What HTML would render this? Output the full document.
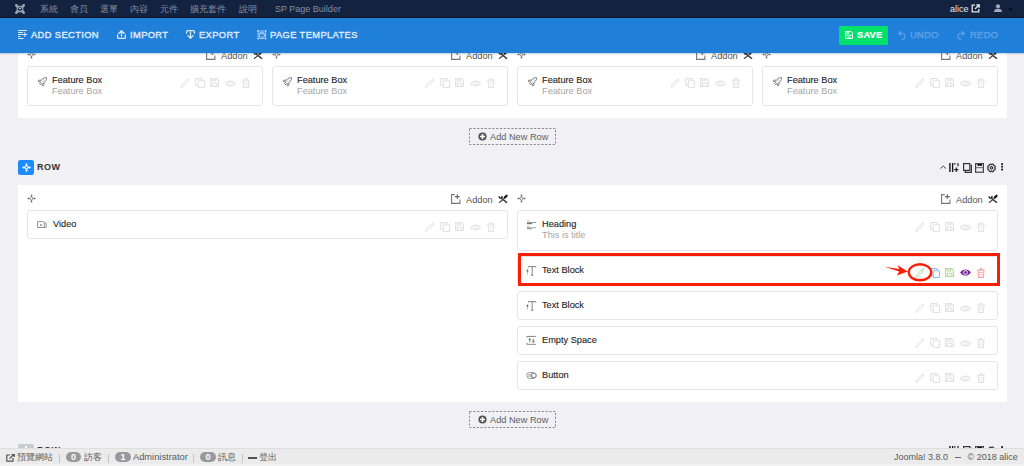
<!DOCTYPE html>
<html><head><meta charset="utf-8">
<style>
*{box-sizing:border-box;margin:0;padding:0}
html,body{width:1024px;height:466px;overflow:hidden}
body{position:relative;background:#f0f0f5;font-family:"Liberation Sans",sans-serif;font-size:9px;color:#333}
.abs{position:absolute}
svg{position:absolute;overflow:visible}
span{position:absolute;white-space:nowrap}
#nav{left:0;top:0;width:1024px;height:18px;background:#13223f;border-bottom:1px solid #0a152b}
.nv{top:3px;font-size:9px;line-height:12px;color:#868fa1}
#tb{left:0;top:18px;width:1024px;height:35px;background:#1f7fd9;box-shadow:0 1px 1.5px rgba(20,60,110,0.25)}
.tbt{top:10px;font-size:9.3px;line-height:14px;font-weight:normal;letter-spacing:0.4px;color:#e2edf9;-webkit-text-stroke:0.35px #e2edf9}
.sec{position:absolute;left:18px;width:989px;background:#fff}
.card{position:absolute;background:#fff;border:1px solid #e6e6e9;border-radius:3px}
.ttl{margin-top:-1px;font-size:9.8px;line-height:11px;color:#1e1e1e;-webkit-text-stroke:0.12px #1e1e1e;transform:scaleX(0.94);transform-origin:0 0}
.sub{margin-top:-1px;font-size:9.8px;line-height:11px;color:#a6a6a6;transform:scaleX(0.94);transform-origin:0 0}
.hdr{font-size:9.8px;line-height:11px;color:#555;transform:scaleX(0.94);transform-origin:0 0}
.anr{position:absolute;width:87px;height:17px;border:1px dashed #8d8d8d}
#foot{left:0;top:448px;width:1024px;height:18px;background:#ebebec;border-top:1px solid #dedede;border-bottom:2px solid #f2f2f3}
.ft{top:3px;font-size:9.3px;line-height:11px;color:#5a5a5a}
.badge{top:3px;height:10px;border-radius:5px;background:#999;color:#fff;font-size:9px;line-height:10px;text-align:center;font-weight:bold}
.sep{top:5px;width:1px;height:9px;background:#c4c4c4}
</style></head><body>
<div class="sec" style="top:40px;height:78px"></div><svg style="left:27px;top:50px" width="9" height="9" viewBox="0 0 9 9"><g fill="#6a6a6a"><path d="M4.5 0.2L3.2 1.8H5.8Z M4.5 8.8L3.2 7.2H5.8Z M0.2 4.5L1.8 3.2V5.8Z M8.8 4.5L7.2 3.2V5.8Z"/></g><g stroke="#6a6a6a" stroke-width="0.8" fill="none"><path d="M4.5 1.5V3 M4.5 6V7.5 M1.5 4.5H3 M6 4.5H7.5"/><circle cx="4.5" cy="4.5" r="1.5"/></g></svg><svg style="left:206px;top:50px" width="10" height="10" viewBox="0 0 10 10"><path d="M3.8 0.6H0.6V9.4H8.9V5.6" fill="none" stroke="#777" stroke-width="1.1"/><path d="M6.3 0.2V5 M3.9 2.6H8.8" stroke="#666" stroke-width="1.1"/></svg><span class="hdr" style="left:221px;top:50px">Addon</span><svg style="left:251px;top:48px" width="14" height="14" viewBox="0 0 14 14"><path d="M3.0 4.4 Q3.2 6.4 5.2 6.2 Q6.4 5.6 5.9 3.9" fill="none" stroke="#111" stroke-width="1.3"/><path d="M5.9 6.6 L10.6 10.4" stroke="#444" stroke-width="1.5" stroke-linecap="round"/><path d="M8.7 5.6 L10.6 3.7" stroke="#111" stroke-width="2.2" stroke-linecap="round"/><path d="M7.6 7.0 L3.3 10.5" stroke="#444" stroke-width="1.1" stroke-linecap="round"/></svg><div class="card" style="left:27px;top:66px;width:236px;height:40px"></div><svg style="left:34px;top:73px" width="16" height="16" viewBox="0 0 16 16"><g transform="translate(8.9,8.2) rotate(45) scale(0.78) translate(-5,-7)" fill="none" stroke="#777" stroke-width="1.1" stroke-linejoin="round"><path d="M5 0.5 C7 2 7.3 4 7.3 6.5 V10.3 H2.7 V6.5 C2.7 4 3 2 5 0.5Z"/><path d="M2.7 7.2 L0.6 9.6 V11.6 L2.7 10.3 M7.3 7.2 L9.4 9.6 V11.6 L7.3 10.3 M4 10.3 V12.3 H6 V10.3"/><path d="M3.6 5.2 H6.4 M3.6 7.6 H6.4" stroke="#aaa" stroke-width="0.9"/></g></svg><span class="ttl" style="left:52px;top:75px">Feature Box</span><span class="sub" style="left:52px;top:86px">Feature Box</span><svg style="left:180px;top:78px" width="10" height="10" viewBox="0 0 10 10"><path d="M1.2 9.3 L0.9 7.9 L7.2 1.3 Q8 0.6 8.7 1.3 Q9.3 2 8.6 2.7 L2.3 9.1 Z M6.4 2.1 L7.9 3.5" fill="none" stroke="#e2e2e2" stroke-width="1" stroke-linejoin="round"/></svg><svg style="left:195px;top:78px" width="10" height="10" viewBox="0 0 10 10"><rect x="0.6" y="0.6" width="6.6" height="6.8" rx="0.6" fill="none" stroke="#e2e2e2" stroke-width="1.1"/><rect x="3.2" y="2.8" width="6.3" height="6.7" rx="0.4" fill="#fff" stroke="#e2e2e2" stroke-width="1.1"/></svg><svg style="left:210px;top:78.3px" width="9" height="9" viewBox="0 0 9 9"><path d="M0.6 0.6H6.8L8.4 2.2V8.4H0.6Z" fill="none" stroke="#e2e2e2" stroke-width="1.1"/><path d="M2.2 0.6V3H5.8V0.6 M4.6 1.3V2.3" fill="none" stroke="#e2e2e2" stroke-width="1"/><rect x="2.2" y="5.2" width="4.6" height="3.2" fill="none" stroke="#e2e2e2" stroke-width="1"/></svg><svg style="left:225px;top:79.5px" width="11" height="7" viewBox="0 0 11 7"><path d="M0.6 3.5 C2.6 0.2 8.4 0.2 10.4 3.5 C8.4 6.8 2.6 6.8 0.6 3.5Z" fill="none" stroke="#e2e2e2" stroke-width="1.1"/><circle cx="5.5" cy="3.5" r="1.8" fill="none" stroke="#e2e2e2" stroke-width="1"/></svg><svg style="left:242px;top:78px" width="8" height="10" viewBox="0 0 8 10"><path d="M0.3 2.2H7.7 M2.6 0.7H5.4" stroke="#e2e2e2" stroke-width="1.2"/><path d="M1.1 2.5L1.6 9.4H6.4L6.9 2.5" fill="none" stroke="#e2e2e2" stroke-width="1.1"/><path d="M2.2 4.5H5.8 M2.3 6.7H5.7" stroke="#e2e2e2" stroke-width="0.8"/></svg><svg style="left:272px;top:50px" width="9" height="9" viewBox="0 0 9 9"><g fill="#6a6a6a"><path d="M4.5 0.2L3.2 1.8H5.8Z M4.5 8.8L3.2 7.2H5.8Z M0.2 4.5L1.8 3.2V5.8Z M8.8 4.5L7.2 3.2V5.8Z"/></g><g stroke="#6a6a6a" stroke-width="0.8" fill="none"><path d="M4.5 1.5V3 M4.5 6V7.5 M1.5 4.5H3 M6 4.5H7.5"/><circle cx="4.5" cy="4.5" r="1.5"/></g></svg><svg style="left:451px;top:50px" width="10" height="10" viewBox="0 0 10 10"><path d="M3.8 0.6H0.6V9.4H8.9V5.6" fill="none" stroke="#777" stroke-width="1.1"/><path d="M6.3 0.2V5 M3.9 2.6H8.8" stroke="#666" stroke-width="1.1"/></svg><span class="hdr" style="left:466px;top:50px">Addon</span><svg style="left:496px;top:48px" width="14" height="14" viewBox="0 0 14 14"><path d="M3.0 4.4 Q3.2 6.4 5.2 6.2 Q6.4 5.6 5.9 3.9" fill="none" stroke="#111" stroke-width="1.3"/><path d="M5.9 6.6 L10.6 10.4" stroke="#444" stroke-width="1.5" stroke-linecap="round"/><path d="M8.7 5.6 L10.6 3.7" stroke="#111" stroke-width="2.2" stroke-linecap="round"/><path d="M7.6 7.0 L3.3 10.5" stroke="#444" stroke-width="1.1" stroke-linecap="round"/></svg><div class="card" style="left:272px;top:66px;width:236px;height:40px"></div><svg style="left:279px;top:73px" width="16" height="16" viewBox="0 0 16 16"><g transform="translate(8.9,8.2) rotate(45) scale(0.78) translate(-5,-7)" fill="none" stroke="#777" stroke-width="1.1" stroke-linejoin="round"><path d="M5 0.5 C7 2 7.3 4 7.3 6.5 V10.3 H2.7 V6.5 C2.7 4 3 2 5 0.5Z"/><path d="M2.7 7.2 L0.6 9.6 V11.6 L2.7 10.3 M7.3 7.2 L9.4 9.6 V11.6 L7.3 10.3 M4 10.3 V12.3 H6 V10.3"/><path d="M3.6 5.2 H6.4 M3.6 7.6 H6.4" stroke="#aaa" stroke-width="0.9"/></g></svg><span class="ttl" style="left:297px;top:75px">Feature Box</span><span class="sub" style="left:297px;top:86px">Feature Box</span><svg style="left:425px;top:78px" width="10" height="10" viewBox="0 0 10 10"><path d="M1.2 9.3 L0.9 7.9 L7.2 1.3 Q8 0.6 8.7 1.3 Q9.3 2 8.6 2.7 L2.3 9.1 Z M6.4 2.1 L7.9 3.5" fill="none" stroke="#e2e2e2" stroke-width="1" stroke-linejoin="round"/></svg><svg style="left:440px;top:78px" width="10" height="10" viewBox="0 0 10 10"><rect x="0.6" y="0.6" width="6.6" height="6.8" rx="0.6" fill="none" stroke="#e2e2e2" stroke-width="1.1"/><rect x="3.2" y="2.8" width="6.3" height="6.7" rx="0.4" fill="#fff" stroke="#e2e2e2" stroke-width="1.1"/></svg><svg style="left:455px;top:78.3px" width="9" height="9" viewBox="0 0 9 9"><path d="M0.6 0.6H6.8L8.4 2.2V8.4H0.6Z" fill="none" stroke="#e2e2e2" stroke-width="1.1"/><path d="M2.2 0.6V3H5.8V0.6 M4.6 1.3V2.3" fill="none" stroke="#e2e2e2" stroke-width="1"/><rect x="2.2" y="5.2" width="4.6" height="3.2" fill="none" stroke="#e2e2e2" stroke-width="1"/></svg><svg style="left:470px;top:79.5px" width="11" height="7" viewBox="0 0 11 7"><path d="M0.6 3.5 C2.6 0.2 8.4 0.2 10.4 3.5 C8.4 6.8 2.6 6.8 0.6 3.5Z" fill="none" stroke="#e2e2e2" stroke-width="1.1"/><circle cx="5.5" cy="3.5" r="1.8" fill="none" stroke="#e2e2e2" stroke-width="1"/></svg><svg style="left:487px;top:78px" width="8" height="10" viewBox="0 0 8 10"><path d="M0.3 2.2H7.7 M2.6 0.7H5.4" stroke="#e2e2e2" stroke-width="1.2"/><path d="M1.1 2.5L1.6 9.4H6.4L6.9 2.5" fill="none" stroke="#e2e2e2" stroke-width="1.1"/><path d="M2.2 4.5H5.8 M2.3 6.7H5.7" stroke="#e2e2e2" stroke-width="0.8"/></svg><svg style="left:517px;top:50px" width="9" height="9" viewBox="0 0 9 9"><g fill="#6a6a6a"><path d="M4.5 0.2L3.2 1.8H5.8Z M4.5 8.8L3.2 7.2H5.8Z M0.2 4.5L1.8 3.2V5.8Z M8.8 4.5L7.2 3.2V5.8Z"/></g><g stroke="#6a6a6a" stroke-width="0.8" fill="none"><path d="M4.5 1.5V3 M4.5 6V7.5 M1.5 4.5H3 M6 4.5H7.5"/><circle cx="4.5" cy="4.5" r="1.5"/></g></svg><svg style="left:696px;top:50px" width="10" height="10" viewBox="0 0 10 10"><path d="M3.8 0.6H0.6V9.4H8.9V5.6" fill="none" stroke="#777" stroke-width="1.1"/><path d="M6.3 0.2V5 M3.9 2.6H8.8" stroke="#666" stroke-width="1.1"/></svg><span class="hdr" style="left:711px;top:50px">Addon</span><svg style="left:741px;top:48px" width="14" height="14" viewBox="0 0 14 14"><path d="M3.0 4.4 Q3.2 6.4 5.2 6.2 Q6.4 5.6 5.9 3.9" fill="none" stroke="#111" stroke-width="1.3"/><path d="M5.9 6.6 L10.6 10.4" stroke="#444" stroke-width="1.5" stroke-linecap="round"/><path d="M8.7 5.6 L10.6 3.7" stroke="#111" stroke-width="2.2" stroke-linecap="round"/><path d="M7.6 7.0 L3.3 10.5" stroke="#444" stroke-width="1.1" stroke-linecap="round"/></svg><div class="card" style="left:517px;top:66px;width:236px;height:40px"></div><svg style="left:524px;top:73px" width="16" height="16" viewBox="0 0 16 16"><g transform="translate(8.9,8.2) rotate(45) scale(0.78) translate(-5,-7)" fill="none" stroke="#777" stroke-width="1.1" stroke-linejoin="round"><path d="M5 0.5 C7 2 7.3 4 7.3 6.5 V10.3 H2.7 V6.5 C2.7 4 3 2 5 0.5Z"/><path d="M2.7 7.2 L0.6 9.6 V11.6 L2.7 10.3 M7.3 7.2 L9.4 9.6 V11.6 L7.3 10.3 M4 10.3 V12.3 H6 V10.3"/><path d="M3.6 5.2 H6.4 M3.6 7.6 H6.4" stroke="#aaa" stroke-width="0.9"/></g></svg><span class="ttl" style="left:542px;top:75px">Feature Box</span><span class="sub" style="left:542px;top:86px">Feature Box</span><svg style="left:670px;top:78px" width="10" height="10" viewBox="0 0 10 10"><path d="M1.2 9.3 L0.9 7.9 L7.2 1.3 Q8 0.6 8.7 1.3 Q9.3 2 8.6 2.7 L2.3 9.1 Z M6.4 2.1 L7.9 3.5" fill="none" stroke="#e2e2e2" stroke-width="1" stroke-linejoin="round"/></svg><svg style="left:685px;top:78px" width="10" height="10" viewBox="0 0 10 10"><rect x="0.6" y="0.6" width="6.6" height="6.8" rx="0.6" fill="none" stroke="#e2e2e2" stroke-width="1.1"/><rect x="3.2" y="2.8" width="6.3" height="6.7" rx="0.4" fill="#fff" stroke="#e2e2e2" stroke-width="1.1"/></svg><svg style="left:700px;top:78.3px" width="9" height="9" viewBox="0 0 9 9"><path d="M0.6 0.6H6.8L8.4 2.2V8.4H0.6Z" fill="none" stroke="#e2e2e2" stroke-width="1.1"/><path d="M2.2 0.6V3H5.8V0.6 M4.6 1.3V2.3" fill="none" stroke="#e2e2e2" stroke-width="1"/><rect x="2.2" y="5.2" width="4.6" height="3.2" fill="none" stroke="#e2e2e2" stroke-width="1"/></svg><svg style="left:715px;top:79.5px" width="11" height="7" viewBox="0 0 11 7"><path d="M0.6 3.5 C2.6 0.2 8.4 0.2 10.4 3.5 C8.4 6.8 2.6 6.8 0.6 3.5Z" fill="none" stroke="#e2e2e2" stroke-width="1.1"/><circle cx="5.5" cy="3.5" r="1.8" fill="none" stroke="#e2e2e2" stroke-width="1"/></svg><svg style="left:732px;top:78px" width="8" height="10" viewBox="0 0 8 10"><path d="M0.3 2.2H7.7 M2.6 0.7H5.4" stroke="#e2e2e2" stroke-width="1.2"/><path d="M1.1 2.5L1.6 9.4H6.4L6.9 2.5" fill="none" stroke="#e2e2e2" stroke-width="1.1"/><path d="M2.2 4.5H5.8 M2.3 6.7H5.7" stroke="#e2e2e2" stroke-width="0.8"/></svg><svg style="left:762px;top:50px" width="9" height="9" viewBox="0 0 9 9"><g fill="#6a6a6a"><path d="M4.5 0.2L3.2 1.8H5.8Z M4.5 8.8L3.2 7.2H5.8Z M0.2 4.5L1.8 3.2V5.8Z M8.8 4.5L7.2 3.2V5.8Z"/></g><g stroke="#6a6a6a" stroke-width="0.8" fill="none"><path d="M4.5 1.5V3 M4.5 6V7.5 M1.5 4.5H3 M6 4.5H7.5"/><circle cx="4.5" cy="4.5" r="1.5"/></g></svg><svg style="left:941px;top:50px" width="10" height="10" viewBox="0 0 10 10"><path d="M3.8 0.6H0.6V9.4H8.9V5.6" fill="none" stroke="#777" stroke-width="1.1"/><path d="M6.3 0.2V5 M3.9 2.6H8.8" stroke="#666" stroke-width="1.1"/></svg><span class="hdr" style="left:956px;top:50px">Addon</span><svg style="left:986px;top:48px" width="14" height="14" viewBox="0 0 14 14"><path d="M3.0 4.4 Q3.2 6.4 5.2 6.2 Q6.4 5.6 5.9 3.9" fill="none" stroke="#111" stroke-width="1.3"/><path d="M5.9 6.6 L10.6 10.4" stroke="#444" stroke-width="1.5" stroke-linecap="round"/><path d="M8.7 5.6 L10.6 3.7" stroke="#111" stroke-width="2.2" stroke-linecap="round"/><path d="M7.6 7.0 L3.3 10.5" stroke="#444" stroke-width="1.1" stroke-linecap="round"/></svg><div class="card" style="left:762px;top:66px;width:236px;height:40px"></div><svg style="left:769px;top:73px" width="16" height="16" viewBox="0 0 16 16"><g transform="translate(8.9,8.2) rotate(45) scale(0.78) translate(-5,-7)" fill="none" stroke="#777" stroke-width="1.1" stroke-linejoin="round"><path d="M5 0.5 C7 2 7.3 4 7.3 6.5 V10.3 H2.7 V6.5 C2.7 4 3 2 5 0.5Z"/><path d="M2.7 7.2 L0.6 9.6 V11.6 L2.7 10.3 M7.3 7.2 L9.4 9.6 V11.6 L7.3 10.3 M4 10.3 V12.3 H6 V10.3"/><path d="M3.6 5.2 H6.4 M3.6 7.6 H6.4" stroke="#aaa" stroke-width="0.9"/></g></svg><span class="ttl" style="left:787px;top:75px">Feature Box</span><span class="sub" style="left:787px;top:86px">Feature Box</span><svg style="left:915px;top:78px" width="10" height="10" viewBox="0 0 10 10"><path d="M1.2 9.3 L0.9 7.9 L7.2 1.3 Q8 0.6 8.7 1.3 Q9.3 2 8.6 2.7 L2.3 9.1 Z M6.4 2.1 L7.9 3.5" fill="none" stroke="#e2e2e2" stroke-width="1" stroke-linejoin="round"/></svg><svg style="left:930px;top:78px" width="10" height="10" viewBox="0 0 10 10"><rect x="0.6" y="0.6" width="6.6" height="6.8" rx="0.6" fill="none" stroke="#e2e2e2" stroke-width="1.1"/><rect x="3.2" y="2.8" width="6.3" height="6.7" rx="0.4" fill="#fff" stroke="#e2e2e2" stroke-width="1.1"/></svg><svg style="left:945px;top:78.3px" width="9" height="9" viewBox="0 0 9 9"><path d="M0.6 0.6H6.8L8.4 2.2V8.4H0.6Z" fill="none" stroke="#e2e2e2" stroke-width="1.1"/><path d="M2.2 0.6V3H5.8V0.6 M4.6 1.3V2.3" fill="none" stroke="#e2e2e2" stroke-width="1"/><rect x="2.2" y="5.2" width="4.6" height="3.2" fill="none" stroke="#e2e2e2" stroke-width="1"/></svg><svg style="left:960px;top:79.5px" width="11" height="7" viewBox="0 0 11 7"><path d="M0.6 3.5 C2.6 0.2 8.4 0.2 10.4 3.5 C8.4 6.8 2.6 6.8 0.6 3.5Z" fill="none" stroke="#e2e2e2" stroke-width="1.1"/><circle cx="5.5" cy="3.5" r="1.8" fill="none" stroke="#e2e2e2" stroke-width="1"/></svg><svg style="left:977px;top:78px" width="8" height="10" viewBox="0 0 8 10"><path d="M0.3 2.2H7.7 M2.6 0.7H5.4" stroke="#e2e2e2" stroke-width="1.2"/><path d="M1.1 2.5L1.6 9.4H6.4L6.9 2.5" fill="none" stroke="#e2e2e2" stroke-width="1.1"/><path d="M2.2 4.5H5.8 M2.3 6.7H5.7" stroke="#e2e2e2" stroke-width="0.8"/></svg><svg style="left:469px;top:128px" width="87" height="17" viewBox="0 0 87 17"><rect x="0.5" y="0.5" width="86" height="16" fill="none" stroke="#8a8a8a" stroke-width="1" stroke-dasharray="2.2 1.6"/></svg><svg style="left:477.5px;top:132px" width="9" height="9" viewBox="0 0 9 9"><circle cx="4.5" cy="4.5" r="4.1" fill="#555"/><path d="M4.5 2V7M2 4.5H7" stroke="#fff" stroke-width="1.6"/></svg><span class="hdr" style="left:489.5px;top:131px;color:#5e5e5e">Add New Row</span><div class="abs" style="left:18px;top:160px;width:16px;height:15px;background:#1b8bff;border-radius:2.5px"></div><svg style="left:21.5px;top:163px" width="9" height="9" viewBox="0 0 9 9"><g fill="#fff"><path d="M4.5 0L3 1.8H6Z M4.5 9L3 7.2H6Z M0 4.5L1.8 3V6Z M9 4.5L7.2 3V6Z"/></g><g stroke="#fff" stroke-width="1.1" fill="none"><path d="M4.5 1.5V3 M4.5 6V7.5 M1.5 4.5H3 M6 4.5H7.5"/><circle cx="4.5" cy="4.5" r="1.6"/></g></svg><span style="left:37px;top:162px;font-size:9px;line-height:11px;font-weight:bold;letter-spacing:0.5px;color:#333">ROW</span><svg style="left:940px;top:165px" width="7" height="5" viewBox="0 0 7 5"><path d="M0.4 3.6L3.2 1L6 3.6" fill="none" stroke="#444" stroke-width="1"/></svg><svg style="left:949px;top:163px" width="10" height="9" viewBox="0 0 10 9"><path d="M0.9 0V9" stroke="#444" stroke-width="1.8"/><path d="M3.6 0V9" stroke="#111" stroke-width="1.3"/><path d="M5.8 0V1.8 M9 0V3.2 M7.3 4.5V9 M5.2 6.7H9.4" stroke="#222" stroke-width="1.2"/></svg><svg style="left:963px;top:162.5px" width="9" height="10" viewBox="0 0 9 10"><rect x="0.6" y="0.6" width="6.2" height="6.8" fill="none" stroke="#333" stroke-width="1.2"/><path d="M7.4 2.4H8.4V9.3H2.2V8" fill="none" stroke="#333" stroke-width="1.2"/></svg><svg style="left:975px;top:162.5px" width="9" height="10" viewBox="0 0 9 10"><rect x="0.6" y="0.6" width="7.8" height="8.6" fill="none" stroke="#444" stroke-width="1.2"/><rect x="2.4" y="1" width="4.6" height="1.8" fill="#111"/><path d="M1 4.7H8" stroke="#666" stroke-width="1"/></svg><svg style="left:987px;top:162.5px" width="9" height="10" viewBox="0 0 9 10"><g fill="none" stroke="#333" stroke-width="1.15" stroke-linejoin="round"><path d="M5.38 1.00 L6.63 1.52 L6.65 2.46 L6.94 2.75 L7.88 2.77 L8.40 4.02 L7.74 4.70 L7.74 5.10 L8.40 5.78 L7.88 7.03 L6.94 7.05 L6.65 7.34 L6.63 8.28 L5.38 8.80 L4.70 8.14 L4.30 8.14 L3.62 8.80 L2.37 8.28 L2.35 7.34 L2.06 7.05 L1.12 7.03 L0.60 5.78 L1.26 5.10 L1.26 4.70 L0.60 4.02 L1.12 2.77 L2.06 2.75 L2.35 2.46 L2.37 1.52 L3.62 1.00 L4.30 1.66 L4.70 1.66Z"/><circle cx="4.5" cy="4.9" r="1.25"/></g></svg><svg style="left:1001px;top:163px" width="3" height="8" viewBox="0 0 3 8"><circle cx="1.1" cy="1.1" r="1.05" fill="#111"/><circle cx="1.1" cy="3.8" r="1.05" fill="#111"/><circle cx="1.1" cy="6.6" r="1.05" fill="#111"/></svg><div class="sec" style="top:185px;height:217px"></div><svg style="left:27px;top:194px" width="9" height="9" viewBox="0 0 9 9"><g fill="#6a6a6a"><path d="M4.5 0.2L3.2 1.8H5.8Z M4.5 8.8L3.2 7.2H5.8Z M0.2 4.5L1.8 3.2V5.8Z M8.8 4.5L7.2 3.2V5.8Z"/></g><g stroke="#6a6a6a" stroke-width="0.8" fill="none"><path d="M4.5 1.5V3 M4.5 6V7.5 M1.5 4.5H3 M6 4.5H7.5"/><circle cx="4.5" cy="4.5" r="1.5"/></g></svg><svg style="left:451px;top:194px" width="10" height="10" viewBox="0 0 10 10"><path d="M3.8 0.6H0.6V9.4H8.9V5.6" fill="none" stroke="#777" stroke-width="1.1"/><path d="M6.3 0.2V5 M3.9 2.6H8.8" stroke="#666" stroke-width="1.1"/></svg><span class="hdr" style="left:466px;top:194px">Addon</span><svg style="left:496px;top:192px" width="14" height="14" viewBox="0 0 14 14"><path d="M3.0 4.4 Q3.2 6.4 5.2 6.2 Q6.4 5.6 5.9 3.9" fill="none" stroke="#111" stroke-width="1.3"/><path d="M5.9 6.6 L10.6 10.4" stroke="#444" stroke-width="1.5" stroke-linecap="round"/><path d="M8.7 5.6 L10.6 3.7" stroke="#111" stroke-width="2.2" stroke-linecap="round"/><path d="M7.6 7.0 L3.3 10.5" stroke="#444" stroke-width="1.1" stroke-linecap="round"/></svg><svg style="left:517px;top:194px" width="9" height="9" viewBox="0 0 9 9"><g fill="#6a6a6a"><path d="M4.5 0.2L3.2 1.8H5.8Z M4.5 8.8L3.2 7.2H5.8Z M0.2 4.5L1.8 3.2V5.8Z M8.8 4.5L7.2 3.2V5.8Z"/></g><g stroke="#6a6a6a" stroke-width="0.8" fill="none"><path d="M4.5 1.5V3 M4.5 6V7.5 M1.5 4.5H3 M6 4.5H7.5"/><circle cx="4.5" cy="4.5" r="1.5"/></g></svg><svg style="left:941px;top:194px" width="10" height="10" viewBox="0 0 10 10"><path d="M3.8 0.6H0.6V9.4H8.9V5.6" fill="none" stroke="#777" stroke-width="1.1"/><path d="M6.3 0.2V5 M3.9 2.6H8.8" stroke="#666" stroke-width="1.1"/></svg><span class="hdr" style="left:956px;top:194px">Addon</span><svg style="left:986px;top:192px" width="14" height="14" viewBox="0 0 14 14"><path d="M3.0 4.4 Q3.2 6.4 5.2 6.2 Q6.4 5.6 5.9 3.9" fill="none" stroke="#111" stroke-width="1.3"/><path d="M5.9 6.6 L10.6 10.4" stroke="#444" stroke-width="1.5" stroke-linecap="round"/><path d="M8.7 5.6 L10.6 3.7" stroke="#111" stroke-width="2.2" stroke-linecap="round"/><path d="M7.6 7.0 L3.3 10.5" stroke="#444" stroke-width="1.1" stroke-linecap="round"/></svg><div class="card" style="left:27px;top:210px;width:481px;height:29px"></div><svg style="left:37px;top:221px" width="10" height="7" viewBox="0 0 10 7"><g fill="none" stroke="#888" stroke-width="0.9"><path d="M0.5 0.6H5.6L8.6 1.8"/><path d="M0.5 0.6V6.5H9.2V1.9"/><path d="M7.3 2V6.5"/></g><path d="M3.3 2.7L5.3 4.1L3.3 5.5Z" fill="#777"/></svg><span class="ttl" style="left:53px;top:219px">Video</span><svg style="left:425px;top:222px" width="10" height="10" viewBox="0 0 10 10"><path d="M1.2 9.3 L0.9 7.9 L7.2 1.3 Q8 0.6 8.7 1.3 Q9.3 2 8.6 2.7 L2.3 9.1 Z M6.4 2.1 L7.9 3.5" fill="none" stroke="#e2e2e2" stroke-width="1" stroke-linejoin="round"/></svg><svg style="left:440px;top:222px" width="10" height="10" viewBox="0 0 10 10"><rect x="0.6" y="0.6" width="6.6" height="6.8" rx="0.6" fill="none" stroke="#e2e2e2" stroke-width="1.1"/><rect x="3.2" y="2.8" width="6.3" height="6.7" rx="0.4" fill="#fff" stroke="#e2e2e2" stroke-width="1.1"/></svg><svg style="left:455px;top:222.3px" width="9" height="9" viewBox="0 0 9 9"><path d="M0.6 0.6H6.8L8.4 2.2V8.4H0.6Z" fill="none" stroke="#e2e2e2" stroke-width="1.1"/><path d="M2.2 0.6V3H5.8V0.6 M4.6 1.3V2.3" fill="none" stroke="#e2e2e2" stroke-width="1"/><rect x="2.2" y="5.2" width="4.6" height="3.2" fill="none" stroke="#e2e2e2" stroke-width="1"/></svg><svg style="left:470px;top:223.5px" width="11" height="7" viewBox="0 0 11 7"><path d="M0.6 3.5 C2.6 0.2 8.4 0.2 10.4 3.5 C8.4 6.8 2.6 6.8 0.6 3.5Z" fill="none" stroke="#e2e2e2" stroke-width="1.1"/><circle cx="5.5" cy="3.5" r="1.8" fill="none" stroke="#e2e2e2" stroke-width="1"/></svg><svg style="left:487px;top:222px" width="8" height="10" viewBox="0 0 8 10"><path d="M0.3 2.2H7.7 M2.6 0.7H5.4" stroke="#e2e2e2" stroke-width="1.2"/><path d="M1.1 2.5L1.6 9.4H6.4L6.9 2.5" fill="none" stroke="#e2e2e2" stroke-width="1.1"/><path d="M2.2 4.5H5.8 M2.3 6.7H5.7" stroke="#e2e2e2" stroke-width="0.8"/></svg><div class="card" style="left:517px;top:210px;width:481px;height:41px"></div><svg style="left:526px;top:219.5px" width="10" height="10" viewBox="0 0 10 10"><rect x="0.5" y="0.3" width="3.5" height="1" fill="#c8c8c8"/><rect x="1" y="2" width="9" height="1" fill="#999"/><rect x="1" y="3" width="5" height="1.2" fill="#777"/><rect x="1" y="5.8" width="2.5" height="1" fill="#bbb"/><rect x="1" y="7.2" width="9" height="1" fill="#aaa"/><rect x="1" y="8.2" width="5" height="1" fill="#888"/></svg><span class="ttl" style="left:542px;top:219px">Heading</span><span class="sub" style="left:542px;top:230px">This is title</span><svg style="left:915px;top:222px" width="10" height="10" viewBox="0 0 10 10"><path d="M1.2 9.3 L0.9 7.9 L7.2 1.3 Q8 0.6 8.7 1.3 Q9.3 2 8.6 2.7 L2.3 9.1 Z M6.4 2.1 L7.9 3.5" fill="none" stroke="#e2e2e2" stroke-width="1" stroke-linejoin="round"/></svg><svg style="left:930px;top:222px" width="10" height="10" viewBox="0 0 10 10"><rect x="0.6" y="0.6" width="6.6" height="6.8" rx="0.6" fill="none" stroke="#e2e2e2" stroke-width="1.1"/><rect x="3.2" y="2.8" width="6.3" height="6.7" rx="0.4" fill="#fff" stroke="#e2e2e2" stroke-width="1.1"/></svg><svg style="left:945px;top:222.3px" width="9" height="9" viewBox="0 0 9 9"><path d="M0.6 0.6H6.8L8.4 2.2V8.4H0.6Z" fill="none" stroke="#e2e2e2" stroke-width="1.1"/><path d="M2.2 0.6V3H5.8V0.6 M4.6 1.3V2.3" fill="none" stroke="#e2e2e2" stroke-width="1"/><rect x="2.2" y="5.2" width="4.6" height="3.2" fill="none" stroke="#e2e2e2" stroke-width="1"/></svg><svg style="left:960px;top:223.5px" width="11" height="7" viewBox="0 0 11 7"><path d="M0.6 3.5 C2.6 0.2 8.4 0.2 10.4 3.5 C8.4 6.8 2.6 6.8 0.6 3.5Z" fill="none" stroke="#e2e2e2" stroke-width="1.1"/><circle cx="5.5" cy="3.5" r="1.8" fill="none" stroke="#e2e2e2" stroke-width="1"/></svg><svg style="left:977px;top:222px" width="8" height="10" viewBox="0 0 8 10"><path d="M0.3 2.2H7.7 M2.6 0.7H5.4" stroke="#e2e2e2" stroke-width="1.2"/><path d="M1.1 2.5L1.6 9.4H6.4L6.9 2.5" fill="none" stroke="#e2e2e2" stroke-width="1.1"/><path d="M2.2 4.5H5.8 M2.3 6.7H5.7" stroke="#e2e2e2" stroke-width="0.8"/></svg><div class="card" style="left:517px;top:256px;width:481px;height:29px"></div><svg style="left:526px;top:265px" width="11" height="11" viewBox="0 0 11 11"><g fill="none" stroke="#777" stroke-width="0.9"><path d="M2.3 2.5V1.6H9.8V2.5 M6.2 1.6V10.2 M5 10.2H7.4"/></g><path d="M1.5 4.5V9.5" stroke="#bbb" stroke-width="1"/><circle cx="1.5" cy="5.7" r="0.9" fill="#555"/></svg><span class="ttl" style="left:542px;top:265px">Text Block</span><svg style="left:915px;top:268px" width="10" height="10" viewBox="0 0 10 10"><path d="M1.2 9.3 L0.9 7.9 L7.2 1.3 Q8 0.6 8.7 1.3 Q9.3 2 8.6 2.7 L2.3 9.1 Z M6.4 2.1 L7.9 3.5" fill="none" stroke="#b3dc9b" stroke-width="1" stroke-linejoin="round"/></svg><svg style="left:930px;top:268px" width="10" height="10" viewBox="0 0 10 10"><rect x="0.6" y="0.6" width="6.6" height="6.8" rx="0.6" fill="none" stroke="#8dbcf2" stroke-width="1.1"/><rect x="3.2" y="2.8" width="6.3" height="6.7" rx="0.4" fill="#fff" stroke="#8dbcf2" stroke-width="1.1"/></svg><svg style="left:945px;top:268.3px" width="9" height="9" viewBox="0 0 9 9"><path d="M0.6 0.6H6.8L8.4 2.2V8.4H0.6Z" fill="none" stroke="#b3dc9b" stroke-width="1.1"/><path d="M2.2 0.6V3H5.8V0.6 M4.6 1.3V2.3" fill="none" stroke="#b3dc9b" stroke-width="1"/><rect x="2.2" y="5.2" width="4.6" height="3.2" fill="none" stroke="#b3dc9b" stroke-width="1"/></svg><svg style="left:960px;top:269px" width="11" height="7" viewBox="0 0 11 7"><path d="M0.1 3.5 C2.3 -0.6 8.7 -0.6 10.9 3.5 C8.7 7.6 2.3 7.6 0.1 3.5Z" fill="#7a2a97"/><circle cx="5.5" cy="3.5" r="1.9" fill="none" stroke="#fff" stroke-width="0.9"/><circle cx="5.5" cy="3.5" r="0.9" fill="#7a2a97"/></svg><svg style="left:977px;top:268px" width="8" height="10" viewBox="0 0 8 10"><path d="M0.3 2.2H7.7 M2.6 0.7H5.4" stroke="#f6a4ab" stroke-width="1.2"/><path d="M1.1 2.5L1.6 9.4H6.4L6.9 2.5" fill="none" stroke="#f6a4ab" stroke-width="1.1"/><path d="M2.2 4.5H5.8 M2.3 6.7H5.7" stroke="#f6a4ab" stroke-width="0.8"/></svg><div class="card" style="left:517px;top:291px;width:481px;height:29px"></div><svg style="left:526px;top:300px" width="11" height="11" viewBox="0 0 11 11"><g fill="none" stroke="#777" stroke-width="0.9"><path d="M2.3 2.5V1.6H9.8V2.5 M6.2 1.6V10.2 M5 10.2H7.4"/></g><path d="M1.5 4.5V9.5" stroke="#bbb" stroke-width="1"/><circle cx="1.5" cy="5.7" r="0.9" fill="#555"/></svg><span class="ttl" style="left:542px;top:300px">Text Block</span><svg style="left:915px;top:303px" width="10" height="10" viewBox="0 0 10 10"><path d="M1.2 9.3 L0.9 7.9 L7.2 1.3 Q8 0.6 8.7 1.3 Q9.3 2 8.6 2.7 L2.3 9.1 Z M6.4 2.1 L7.9 3.5" fill="none" stroke="#e2e2e2" stroke-width="1" stroke-linejoin="round"/></svg><svg style="left:930px;top:303px" width="10" height="10" viewBox="0 0 10 10"><rect x="0.6" y="0.6" width="6.6" height="6.8" rx="0.6" fill="none" stroke="#e2e2e2" stroke-width="1.1"/><rect x="3.2" y="2.8" width="6.3" height="6.7" rx="0.4" fill="#fff" stroke="#e2e2e2" stroke-width="1.1"/></svg><svg style="left:945px;top:303.3px" width="9" height="9" viewBox="0 0 9 9"><path d="M0.6 0.6H6.8L8.4 2.2V8.4H0.6Z" fill="none" stroke="#e2e2e2" stroke-width="1.1"/><path d="M2.2 0.6V3H5.8V0.6 M4.6 1.3V2.3" fill="none" stroke="#e2e2e2" stroke-width="1"/><rect x="2.2" y="5.2" width="4.6" height="3.2" fill="none" stroke="#e2e2e2" stroke-width="1"/></svg><svg style="left:960px;top:304.5px" width="11" height="7" viewBox="0 0 11 7"><path d="M0.6 3.5 C2.6 0.2 8.4 0.2 10.4 3.5 C8.4 6.8 2.6 6.8 0.6 3.5Z" fill="none" stroke="#e2e2e2" stroke-width="1.1"/><circle cx="5.5" cy="3.5" r="1.8" fill="none" stroke="#e2e2e2" stroke-width="1"/></svg><svg style="left:977px;top:303px" width="8" height="10" viewBox="0 0 8 10"><path d="M0.3 2.2H7.7 M2.6 0.7H5.4" stroke="#e2e2e2" stroke-width="1.2"/><path d="M1.1 2.5L1.6 9.4H6.4L6.9 2.5" fill="none" stroke="#e2e2e2" stroke-width="1.1"/><path d="M2.2 4.5H5.8 M2.3 6.7H5.7" stroke="#e2e2e2" stroke-width="0.8"/></svg><div class="card" style="left:517px;top:326px;width:481px;height:29px"></div><svg style="left:526px;top:335px" width="11" height="11" viewBox="0 0 11 11"><g fill="none" stroke="#858585" stroke-width="1"><path d="M0.9 2.7V1.4H9.9 M0.9 8V9.3H9.9"/><path d="M3.8 3.6V7.2 M2.6 4.8L3.8 3.6L5 4.8 M7.3 3.8V7.4 M6.1 6.2L7.3 7.4L8.5 6.2" stroke="#6a6a6a" stroke-width="0.95"/></g></svg><span class="ttl" style="left:542px;top:335px">Empty Space</span><svg style="left:915px;top:338px" width="10" height="10" viewBox="0 0 10 10"><path d="M1.2 9.3 L0.9 7.9 L7.2 1.3 Q8 0.6 8.7 1.3 Q9.3 2 8.6 2.7 L2.3 9.1 Z M6.4 2.1 L7.9 3.5" fill="none" stroke="#e2e2e2" stroke-width="1" stroke-linejoin="round"/></svg><svg style="left:930px;top:338px" width="10" height="10" viewBox="0 0 10 10"><rect x="0.6" y="0.6" width="6.6" height="6.8" rx="0.6" fill="none" stroke="#e2e2e2" stroke-width="1.1"/><rect x="3.2" y="2.8" width="6.3" height="6.7" rx="0.4" fill="#fff" stroke="#e2e2e2" stroke-width="1.1"/></svg><svg style="left:945px;top:338.3px" width="9" height="9" viewBox="0 0 9 9"><path d="M0.6 0.6H6.8L8.4 2.2V8.4H0.6Z" fill="none" stroke="#e2e2e2" stroke-width="1.1"/><path d="M2.2 0.6V3H5.8V0.6 M4.6 1.3V2.3" fill="none" stroke="#e2e2e2" stroke-width="1"/><rect x="2.2" y="5.2" width="4.6" height="3.2" fill="none" stroke="#e2e2e2" stroke-width="1"/></svg><svg style="left:960px;top:339.5px" width="11" height="7" viewBox="0 0 11 7"><path d="M0.6 3.5 C2.6 0.2 8.4 0.2 10.4 3.5 C8.4 6.8 2.6 6.8 0.6 3.5Z" fill="none" stroke="#e2e2e2" stroke-width="1.1"/><circle cx="5.5" cy="3.5" r="1.8" fill="none" stroke="#e2e2e2" stroke-width="1"/></svg><svg style="left:977px;top:338px" width="8" height="10" viewBox="0 0 8 10"><path d="M0.3 2.2H7.7 M2.6 0.7H5.4" stroke="#e2e2e2" stroke-width="1.2"/><path d="M1.1 2.5L1.6 9.4H6.4L6.9 2.5" fill="none" stroke="#e2e2e2" stroke-width="1.1"/><path d="M2.2 4.5H5.8 M2.3 6.7H5.7" stroke="#e2e2e2" stroke-width="0.8"/></svg><div class="card" style="left:517px;top:361px;width:481px;height:29px"></div><svg style="left:526px;top:372px" width="11" height="7" viewBox="0 0 11 7"><g fill="none" stroke="#888" stroke-width="0.9"><path d="M8 0.6H3.6A2.9 2.9 0 0 0 3.6 6.4H8"/><circle cx="7.9" cy="3.5" r="2.3" stroke-width="1.1"/><path d="M3.2 2V5 M5 2V5"/></g></svg><span class="ttl" style="left:542px;top:370px">Button</span><svg style="left:915px;top:373px" width="10" height="10" viewBox="0 0 10 10"><path d="M1.2 9.3 L0.9 7.9 L7.2 1.3 Q8 0.6 8.7 1.3 Q9.3 2 8.6 2.7 L2.3 9.1 Z M6.4 2.1 L7.9 3.5" fill="none" stroke="#e2e2e2" stroke-width="1" stroke-linejoin="round"/></svg><svg style="left:930px;top:373px" width="10" height="10" viewBox="0 0 10 10"><rect x="0.6" y="0.6" width="6.6" height="6.8" rx="0.6" fill="none" stroke="#e2e2e2" stroke-width="1.1"/><rect x="3.2" y="2.8" width="6.3" height="6.7" rx="0.4" fill="#fff" stroke="#e2e2e2" stroke-width="1.1"/></svg><svg style="left:945px;top:373.3px" width="9" height="9" viewBox="0 0 9 9"><path d="M0.6 0.6H6.8L8.4 2.2V8.4H0.6Z" fill="none" stroke="#e2e2e2" stroke-width="1.1"/><path d="M2.2 0.6V3H5.8V0.6 M4.6 1.3V2.3" fill="none" stroke="#e2e2e2" stroke-width="1"/><rect x="2.2" y="5.2" width="4.6" height="3.2" fill="none" stroke="#e2e2e2" stroke-width="1"/></svg><svg style="left:960px;top:374.5px" width="11" height="7" viewBox="0 0 11 7"><path d="M0.6 3.5 C2.6 0.2 8.4 0.2 10.4 3.5 C8.4 6.8 2.6 6.8 0.6 3.5Z" fill="none" stroke="#e2e2e2" stroke-width="1.1"/><circle cx="5.5" cy="3.5" r="1.8" fill="none" stroke="#e2e2e2" stroke-width="1"/></svg><svg style="left:977px;top:373px" width="8" height="10" viewBox="0 0 8 10"><path d="M0.3 2.2H7.7 M2.6 0.7H5.4" stroke="#e2e2e2" stroke-width="1.2"/><path d="M1.1 2.5L1.6 9.4H6.4L6.9 2.5" fill="none" stroke="#e2e2e2" stroke-width="1.1"/><path d="M2.2 4.5H5.8 M2.3 6.7H5.7" stroke="#e2e2e2" stroke-width="0.8"/></svg><svg style="left:469px;top:411px" width="87" height="17" viewBox="0 0 87 17"><rect x="0.5" y="0.5" width="86" height="16" fill="none" stroke="#8a8a8a" stroke-width="1" stroke-dasharray="2.2 1.6"/></svg><svg style="left:477.5px;top:415px" width="9" height="9" viewBox="0 0 9 9"><circle cx="4.5" cy="4.5" r="4.1" fill="#555"/><path d="M4.5 2V7M2 4.5H7" stroke="#fff" stroke-width="1.6"/></svg><span class="hdr" style="left:489.5px;top:414px;color:#5e5e5e">Add New Row</span><div class="abs" style="left:18px;top:444px;width:16px;height:16px;background:#c8cad0;border-radius:2px"></div><div class="abs" style="left:25px;top:446px;width:2px;height:2px;background:#fff"></div><span style="left:37px;top:445px;font-size:9px;line-height:11px;font-weight:bold;letter-spacing:0.5px;color:#333">ROW</span><svg style="left:940px;top:448px" width="7" height="5" viewBox="0 0 7 5"><path d="M0.4 3.6L3.2 1L6 3.6" fill="none" stroke="#444" stroke-width="1"/></svg><svg style="left:949px;top:446px" width="10" height="9" viewBox="0 0 10 9"><path d="M0.9 0V9" stroke="#444" stroke-width="1.8"/><path d="M3.6 0V9" stroke="#111" stroke-width="1.3"/><path d="M5.8 0V1.8 M9 0V3.2 M7.3 4.5V9 M5.2 6.7H9.4" stroke="#222" stroke-width="1.2"/></svg><svg style="left:963px;top:445.5px" width="9" height="10" viewBox="0 0 9 10"><rect x="0.6" y="0.6" width="6.2" height="6.8" fill="none" stroke="#333" stroke-width="1.2"/><path d="M7.4 2.4H8.4V9.3H2.2V8" fill="none" stroke="#333" stroke-width="1.2"/></svg><svg style="left:975px;top:445.5px" width="9" height="10" viewBox="0 0 9 10"><rect x="0.6" y="0.6" width="7.8" height="8.6" fill="none" stroke="#444" stroke-width="1.2"/><rect x="2.4" y="1" width="4.6" height="1.8" fill="#111"/><path d="M1 4.7H8" stroke="#666" stroke-width="1"/></svg><svg style="left:987px;top:445.5px" width="9" height="10" viewBox="0 0 9 10"><g fill="none" stroke="#333" stroke-width="1.15" stroke-linejoin="round"><path d="M5.38 1.00 L6.63 1.52 L6.65 2.46 L6.94 2.75 L7.88 2.77 L8.40 4.02 L7.74 4.70 L7.74 5.10 L8.40 5.78 L7.88 7.03 L6.94 7.05 L6.65 7.34 L6.63 8.28 L5.38 8.80 L4.70 8.14 L4.30 8.14 L3.62 8.80 L2.37 8.28 L2.35 7.34 L2.06 7.05 L1.12 7.03 L0.60 5.78 L1.26 5.10 L1.26 4.70 L0.60 4.02 L1.12 2.77 L2.06 2.75 L2.35 2.46 L2.37 1.52 L3.62 1.00 L4.30 1.66 L4.70 1.66Z"/><circle cx="4.5" cy="4.9" r="1.25"/></g></svg><svg style="left:1001px;top:446px" width="3" height="8" viewBox="0 0 3 8"><circle cx="1.1" cy="1.1" r="1.05" fill="#111"/><circle cx="1.1" cy="3.8" r="1.05" fill="#111"/><circle cx="1.1" cy="6.6" r="1.05" fill="#111"/></svg><div class="abs" style="left:518px;top:253px;width:482px;height:33px;border:3px solid #f91e05"></div><svg style="left:880px;top:255px" width="60" height="35" viewBox="0 0 60 35"><ellipse cx="40" cy="17.3" rx="11.2" ry="8" fill="none" stroke="#f91e05" stroke-width="2.4"/><path d="M4.4 11.8L21 14.3L20.6 16.9Z" fill="#f91e05"/><path d="M27.8 16.5L17.6 10.2L19.9 15.6L16.8 20.4Z" fill="#f91e05"/></svg>
<div id="nav" class="abs">
  <svg style="left:15px;top:3.5px" width="10" height="10" viewBox="0 0 10 10"><g fill="none" stroke="#9ea5b3" stroke-width="1.1" stroke-linecap="round">
  <path d="M1.4 1.4 Q5 3.3 8.6 1.4 Q6.7 5 8.6 8.6 Q5 6.7 1.4 8.6 Q3.3 5 1.4 1.4Z"/>
  <path d="M1.6 1.6L8.4 8.4 M8.4 1.6L1.6 8.4"/></g>
  <g fill="#9ea5b3"><circle cx="1.4" cy="1.4" r="1.35"/><circle cx="8.6" cy="1.4" r="1.35"/><circle cx="1.4" cy="8.6" r="1.35"/><circle cx="8.6" cy="8.6" r="1.35"/></g></svg>
  <span class="nv" style="left:40px">系統</span>
  <span class="nv" style="left:70px">會員</span>
  <span class="nv" style="left:100px">選單</span>
  <span class="nv" style="left:130px">內容</span>
  <span class="nv" style="left:160px">元件</span>
  <span class="nv" style="left:190px">擴充套件</span>
  <span class="nv" style="left:239px">說明</span>
  <span class="nv" style="left:275px">SP Page Builder</span>
  <span class="nv" style="left:950px;color:#e4e7ec">alice</span>
  <svg style="left:971px;top:4px" width="9" height="9" viewBox="0 0 9 9"><path d="M4 1.2H1.2v6.6h6.6V5" fill="none" stroke="#e4e7ec" stroke-width="1.3"/><path d="M4 5 L8 1 M5.3 0.8H8.2V3.7" fill="none" stroke="#e4e7ec" stroke-width="1.3"/></svg>
  <svg style="left:994px;top:4px" width="8" height="8" viewBox="0 0 8 8"><circle cx="4" cy="2.3" r="2.1" fill="#a3a9b6"/><path d="M0 8 Q0 4.8 4 4.8 Q8 4.8 8 8Z" fill="#a3a9b6"/></svg>
  <svg style="left:1008px;top:8px" width="5" height="3" viewBox="0 0 5 3"><path d="M0 0H5L2.5 3Z" fill="#06101f"/></svg>
</div>
<div id="tb" class="abs">
  <svg style="left:18px;top:12px" width="10" height="10" viewBox="0 0 10 10"><g stroke="#dce9f8" stroke-width="1"><path d="M0 0.5H9M0 2.5H5M0 4.5H4.6M0 6.5H2.5M0 8.5H5.5M6.8 2.3V7M4.6 4.5H9"/></g></svg>
  <span class="tbt" style="left:31px">ADD SECTION</span>
  <svg style="left:117px;top:12px" width="9" height="9" viewBox="0 0 9 9"><g fill="none" stroke="#dce9f8" stroke-width="1.3" stroke-linecap="round" stroke-linejoin="round"><path d="M1.6 3.4L4.5 0.7L7.4 3.4M4.5 1V6.2"/><path d="M0.6 5V7.4Q0.6 8.4 1.6 8.4H7.4Q8.4 8.4 8.4 7.4V5"/></g></svg>
  <span class="tbt" style="left:130px">IMPORT</span>
  <svg style="left:186px;top:12px" width="9" height="9" viewBox="0 0 9 9"><g fill="none" stroke="#dce9f8" stroke-width="1.3" stroke-linecap="round" stroke-linejoin="round"><path d="M0.6 3.2V1.6Q0.6 0.7 1.6 0.7H7.4Q8.4 0.7 8.4 1.6V3.2"/><path d="M4.5 1.8V8.2M1.9 5.6L4.5 8.3L7.1 5.6"/></g></svg>
  <span class="tbt" style="left:199px">EXPORT</span>
  <svg style="left:257px;top:12px" width="10" height="10" viewBox="0 0 10 10"><g fill="#dce9f8"><circle cx="1" cy="1" r="0.9"/><circle cx="8.6" cy="1" r="0.9"/><circle cx="1" cy="8.6" r="0.9"/><circle cx="8.6" cy="8.6" r="0.9"/></g><g fill="none" stroke="#a9cbef" stroke-width="1"><path d="M2.2 1H7.4M2.2 8.6H7.4M1 2.2V7.4M8.6 2.2V7.4"/></g><path d="M2.3 2.8H7.3" stroke="#c8ddf5" stroke-width="0.9"/><rect x="2.3" y="3.8" width="5" height="3.3" fill="none" stroke="#b9d4f2" stroke-width="0.9"/></svg>
  <span class="tbt" style="left:270px">PAGE TEMPLATES</span>
  <div class="abs" style="left:839px;top:8px;width:49px;height:19px;background:#02e06c;border-radius:1px"></div>
  <svg style="left:845px;top:13px" width="8" height="8" viewBox="0 0 8 8"><path d="M0.5 0.5H6L7.5 2V7.5H0.5Z" fill="none" stroke="#eafff2" stroke-width="1"/><path d="M1.5 0.8H3.3V3H1.5Z" fill="#fff"/><path d="M3.8 0.8V2.6" stroke="#fff" stroke-width="0.9"/><path d="M1.2 4.2H6.8M2.2 6.2H5.8" stroke="#eafff2" stroke-width="1"/></svg>
  <span class="tbt" style="left:857px;top:10px;color:#fff;font-weight:bold;letter-spacing:0.2px;-webkit-text-stroke:0.2px #fff">SAVE</span>
  <svg style="left:898px;top:13px" width="8" height="9" viewBox="0 0 8 9"><g fill="none" stroke="#5d9fe6" stroke-width="1.3" stroke-linecap="round" stroke-linejoin="round"><path d="M2.8 0.6L0.6 2.4L2.7 4.4"/><path d="M0.9 2.4H4Q7 2.4 7 5.3Q7 8.3 3.8 8.3"/></g></svg>
  <span class="tbt" style="left:910px;top:10px;color:#5d9fe6;-webkit-text-stroke:0.45px #5d9fe6">UNDO</span>
  <svg style="left:957px;top:13px" width="8" height="9" viewBox="0 0 8 9"><g fill="none" stroke="#5d9fe6" stroke-width="1.3" stroke-linecap="round" stroke-linejoin="round"><path d="M5.2 0.6L7.4 2.4L5.3 4.4"/><path d="M7.1 2.4H4Q1 2.4 1 5.3Q1 8.3 4.2 8.3"/></g></svg>
  <span class="tbt" style="left:970px;top:10px;color:#5d9fe6;-webkit-text-stroke:0.45px #5d9fe6">REDO</span>
</div>
<div id="foot" class="abs"><svg style="left:6px;top:5px" width="9" height="8" viewBox="0 0 9 8"><path d="M4 1H0.8V7.2H7V4" fill="none" stroke="#555" stroke-width="1.2"/><path d="M3.5 4.5L8 0.5 M5.5 0.5H8.3V3" fill="none" stroke="#555" stroke-width="1.2"/></svg><span class="ft" style="left:17px">預覽網站</span><span class="sep" style="left:59px"></span><span class="badge" style="left:66px;width:15px">0</span><span class="ft" style="left:84px">訪客</span><span class="sep" style="left:108px"></span><span class="badge" style="left:115px;width:16px">1</span><span class="ft" style="left:133px">Administrator</span><span class="sep" style="left:193px"></span><span class="badge" style="left:200px;width:16px">0</span><span class="ft" style="left:218px">訊息</span><span class="sep" style="left:242px"></span><span class="abs" style="left:248px;top:8px;width:9px;height:2px;background:#555"></span><span class="ft" style="left:259px">登出</span><span class="ft" style="left:894px;font-size:9px">Joomla! 3.8.0</span><span class="abs" style="left:955px;top:8px;width:6px;height:1px;background:#666"></span><span class="ft" style="left:967.5px;font-size:9px">© 2018 alice</span></div>
</body></html>
